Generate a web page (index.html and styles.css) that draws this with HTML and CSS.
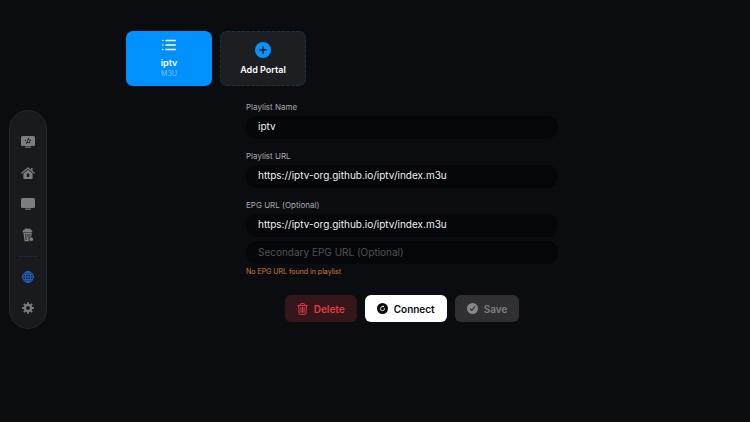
FILE: index.html
```html
<!DOCTYPE html>
<html lang="en">
<head>
    <meta charset="UTF-8">
    <meta name="viewport" content="width=device-width, initial-scale=1.0">
    <title>Portals</title>
    <link rel="stylesheet" href="styles.css">
</head>
<body>
    <!-- Sidebar -->
    <nav class="sidebar">
        <a href="#" aria-label="Live">
            <svg width="14" height="12" viewBox="0 0 14 12">
                <rect x="0" y="0" width="14" height="10" rx="1.5" fill="#7d7d80"/>
                <rect x="4" y="10.5" width="6" height="1.2" rx=".6" fill="#7d7d80"/>
                <path d="M7.4 1.6 8.3 3.6l2 .3-1.5 1.5.2 2-1.8-1L4.4 8.4l1.4-2.6z" fill="#1a1b1f"/>
                <circle cx="4.4" cy="4.4" r=".6" fill="#1a1b1f"/>
                <circle cx="7.6" cy="5" r=".9" fill="#7d7d80"/>
            </svg>
        </a>
        <a href="#" aria-label="Home">
            <svg width="14" height="12" viewBox="0 0 14 12">
                <path d="M.9 6 7 .9 13.1 6" fill="none" stroke="#7d7d80" stroke-width="1.3" stroke-linecap="round" stroke-linejoin="round"/>
                <path d="M10 .9h1.6v3L10 2.6z" fill="#7d7d80"/>
                <path d="M2.4 6.5 7 2.7l4.6 3.8V11a1 1 0 0 1-1 1H3.4a1 1 0 0 1-1-1z" fill="#7d7d80"/>
                <path d="M5.8 10V7.5a1.2 1.2 0 0 1 2.4 0V10z" fill="#1a1b1f"/>
            </svg>
        </a>
        <a href="#" aria-label="TV">
            <svg width="14" height="12" viewBox="0 0 14 12">
                <rect x="0" y="0" width="14" height="10" rx="1.5" fill="#7d7d80"/>
                <rect x="4" y="10.5" width="6" height="1.2" rx=".6" fill="#7d7d80"/>
            </svg>
        </a>
        <a href="#" aria-label="Movies">
            <svg width="12" height="14" viewBox="0 0 12 14">
                <path d="M1 4.4a1.6 1.6 0 0 1 1.4-2.6A2.2 2.2 0 0 1 6 1a2.2 2.2 0 0 1 3 .9 1.6 1.6 0 0 1 1 2.5z" fill="#7d7d80"/>
                <path d="M1.4 5h8.4l-1 8.2H2.6z" fill="#7d7d80"/>
                <path d="M3.7 6l.4 6M6 6v3.5M7.9 6l-.2 2.4" stroke="#1a1b1f" stroke-width=".8"/>
                <circle cx="9.2" cy="11.2" r="2.6" fill="#1a1b1f"/>
                <circle cx="9.2" cy="11.2" r="1.9" fill="#7d7d80"/>
            </svg>
        </a>
        <hr>
        <a href="#" aria-label="Portals">
            <svg width="12" height="12" viewBox="0 0 12 12" fill="none" stroke="#2468cf" stroke-width="1">
                <circle cx="6" cy="6" r="5.4"/>
                <ellipse cx="6" cy="6" rx="2.7" ry="5.4"/>
                <path d="M6 .6v10.8M.6 6h10.8M1.5 3.3h9M1.5 8.7h9"/>
            </svg>
        </a>
        <a href="#" aria-label="Settings">
            <svg width="12" height="12" viewBox="0 0 12 12" fill="none" stroke="#7d7d80">
                <circle cx="6" cy="6" r="3.1" stroke-width="2.2"/>
                <path d="M6 .2v2M6 9.8v2M.2 6h2M9.8 6h2M1.9 1.9l1.4 1.4M8.7 8.7l1.4 1.4M1.9 10.1l1.4-1.4M8.7 3.3l1.4-1.4" stroke-width="1.9"/>
            </svg>
        </a>
    </nav>

    <main>
        <!-- Portal list -->
        <div class="portals">
            <button class="portal active">
                <svg width="14" height="12" viewBox="0 0 14 12" fill="none" stroke="#fff" stroke-width="1.4" stroke-linecap="round">
                    <path d="M4 1.5h9.3M4 6h9.3M4 10.5h9.3M.8 1.5h.1M.8 6h.1M.8 10.5h.1"/>
                </svg>
                <span class="portal-name">iptv</span>
                <span class="portal-type">M3U</span>
            </button>
            <button class="portal add">
                <svg width="16" height="16" viewBox="0 0 16 16">
                    <circle cx="8" cy="8" r="8" fill="#0a91fb"/>
                    <path d="M8 4.6v6.8M4.6 8h6.8" stroke="#10222f" stroke-width="1.3" stroke-linecap="round"/>
                </svg>
                <span class="portal-name">Add Portal</span>
            </button>
        </div>

        <!-- Portal form -->
        <form>
            <div class="field">
                <label for="playlist-name">Playlist Name</label>
                <input type="text" id="playlist-name" value="iptv">
            </div>
            <div class="field">
                <label for="playlist-url">Playlist URL</label>
                <input type="text" id="playlist-url" value="https://iptv-org.github.io/iptv/index.m3u">
            </div>
            <div class="field">
                <label for="epg-url">EPG URL (Optional)</label>
                <input type="text" id="epg-url" value="https://iptv-org.github.io/iptv/index.m3u">
                <input type="text" id="epg-url-2" aria-label="Secondary EPG URL" placeholder="Secondary EPG URL (Optional)">
                <p class="warning">No EPG URL found in playlist</p>
            </div>
            <div class="actions">
                <button type="button" class="delete">
                    <svg width="11" height="12" viewBox="0 0 11 12" fill="none" stroke="#e63b3f" stroke-width="1" stroke-linecap="round" stroke-linejoin="round">
                        <path d="M.7 2.4h9.6M3.5 2.2V1.4a.8.8 0 0 1 .8-.8h2.4a.8.8 0 0 1 .8.8v.8M1.6 2.6l.5 7.8a1.1 1.1 0 0 0 1.1 1h4.6a1.1 1.1 0 0 0 1.1-1l.5-7.8M3.8 4.4l.2 5M5.5 4.4v5M7.2 4.4l-.2 5"/>
                    </svg>
                    Delete
                </button>
                <button type="button" class="connect">
                    <svg width="11" height="11" viewBox="0 0 11 11">
                        <circle cx="5.5" cy="5.5" r="5.5" fill="#08090b"/>
                        <path d="M7.6 5.6A2.1 2.1 0 1 1 5.5 3.5h.6" fill="none" stroke="#fff" stroke-width=".8" stroke-linecap="round"/>
                        <path d="M5.8 2.3 7.3 3.5 5.8 4.7z" fill="#fff"/>
                    </svg>
                    Connect
                </button>
                <button type="button" class="save" disabled>
                    <svg width="11" height="11" viewBox="0 0 11 11">
                        <circle cx="5.5" cy="5.5" r="5.5" fill="#87878a"/>
                        <path d="M3.3 5.8 4.9 7.5 7.7 3.6" fill="none" stroke="#303034" stroke-width="1.1" stroke-linecap="round" stroke-linejoin="round"/>
                    </svg>
                    Save
                </button>
            </div>
        </form>
    </main>
</body>
</html>
```

FILE: styles.css
```css
* {
    box-sizing: border-box;
}
body {
    margin: 0;
    min-height: 100vh;
    display: flex;
    background-color: #0b0c10;
    color: #fff;
    font-family: Inter, "Liberation Sans", sans-serif;
}
button, input {
    font-family: inherit;
}
button {
    border: none;
    cursor: pointer;
}

/* Sidebar */
.sidebar {
    align-self: center;
    flex: none;
    width: 38px;
    margin: 16px 7px 0 9px;
    padding: 16px 0 4px;
    display: flex;
    flex-direction: column;
    background-color: #191a1e;
    border: 1px solid #242529;
    border-radius: 19px;
}
.sidebar a {
    height: 31px;
    display: flex;
    align-items: center;
    justify-content: center;
}
.sidebar hr {
    width: 20px;
    margin: 5px auto;
    border: none;
    border-top: 1px solid #242529;
}

/* Portal cards */
main {
    flex: 1;
    padding: 31px 72px;
}
.portals {
    display: flex;
    gap: 8px;
}
.portal {
    width: 86px;
    height: 55px;
    padding: 0;
    display: flex;
    flex-direction: column;
    align-items: center;
    justify-content: center;
    border-radius: 7px;
    color: #fff;
}
.portal.active {
    background-color: #0091ff;
}
.portal.add {
    background-color: #1d1e21;
    border: 1px dashed #123650;
}
.portal-name {
    margin-top: 6px;
    font-size: 9px;
    line-height: 12px;
    font-weight: 600;
}
.portal-type {
    font-size: 7px;
    line-height: 10px;
    color: #7cc2fb;
}

/* Form */
form {
    max-width: 312px;
    margin: 16px auto 0;
}
.field {
    margin-bottom: 12px;
}
label {
    display: block;
    margin-bottom: 3px;
    font-size: 8px;
    line-height: 11px;
    color: #a9a9ad;
}
input {
    display: block;
    width: 100%;
    height: 23px;
    padding: 0 12px 4px;
    background-color: #050609;
    border: none;
    border-radius: 12px;
    color: #f0f0f2;
    font-size: 10px;
}
input + input {
    margin-top: 4px;
    padding-bottom: 1px;
}
input::placeholder {
    color: #515256;
}
.warning {
    margin: 3px 0 0;
    font-size: 7px;
    line-height: 10px;
    color: #cf7a43;
}

/* Buttons */
.actions {
    display: flex;
    justify-content: center;
    gap: 8px;
    margin-top: 18px;
}
.actions button {
    height: 27px;
    padding: 0 12px;
    display: flex;
    align-items: center;
    gap: 6px;
    border-radius: 6px;
    font-size: 10px;
    font-weight: 600;
}
.delete {
    background-color: #33151a;
    color: #e63b3f;
}
.connect {
    background-color: #fff;
    color: #0b0c10;
}
.save {
    background-color: #303034;
    color: #7f7f83;
}
```
